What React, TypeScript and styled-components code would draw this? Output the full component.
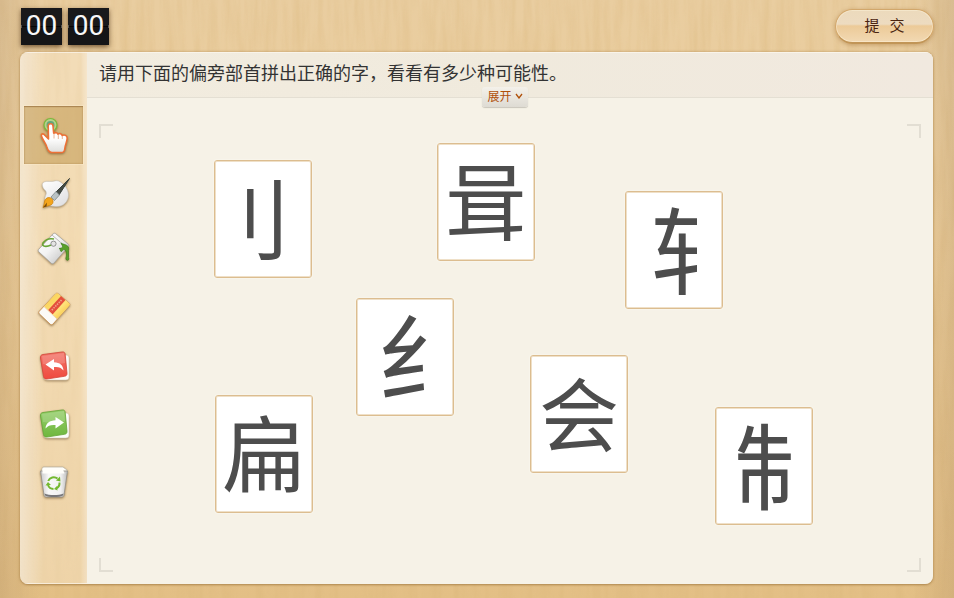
import React, { useState } from "react";
import styled, { createGlobalStyle, css } from "styled-components";

const sans = `"Noto Sans CJK SC", "Noto Sans", sans-serif`;

const grain = (opacity: number) =>
  `url("data:image/svg+xml,${encodeURIComponent(
    `<svg xmlns='http://www.w3.org/2000/svg' width='640' height='640'><filter id='g' x='0' y='0' width='100%' height='100%'><feTurbulence type='fractalNoise' baseFrequency='0.13 0.012' numOctaves='3' seed='7' stitchTiles='stitch'/><feColorMatrix values='0 0 0 0 0.68  0 0 0 0 0.45  0 0 0 0 0.18  1.6 0 0 0 -0.55'/></filter><rect width='640' height='640' filter='url(#g)' opacity='${opacity}'/></svg>`
  )}")`;

const GlobalStyle = createGlobalStyle`
  *, *::before, *::after { box-sizing: border-box; }
  body { margin: 0; font-family: ${sans}; }
  button { font-family: inherit; padding: 0; border: 0; background: none; cursor: pointer; }
`;

const Page = styled.div`
  display: flex;
  flex-direction: column;
  min-height: 100vh;
  padding: 0 20px 14px;
  background:
    linear-gradient(90deg, rgba(150, 120, 85, 0.2), rgba(150, 120, 85, 0) 40px, rgba(150, 120, 85, 0) calc(100% - 40px), rgba(150, 120, 85, 0.2)),
    ${grain(0.35)},
    linear-gradient(#e9cda0, #eccd9a 40%, #e3bf85);
`;

const Header = styled.header`
  display: flex;
  justify-content: space-between;
  align-items: flex-start;
  height: 52px;
  padding: 8px 0 0 1px;
`;

const Timer = styled.div`
  display: flex;
  gap: 6px;
`;

const Digits = styled.span`
  width: 41px;
  height: 37px;
  color: #f7f7f7;
  font: 400 28px/36px Roboto, sans-serif;
  text-align: center;
  background:
    linear-gradient(#555, #555) 0 17px / 1px 3px no-repeat,
    linear-gradient(#555, #555) 100% 17px / 1px 3px no-repeat,
    linear-gradient(#19191b 0 18px, #050505 18px 19px, #151517 19px);
  box-shadow: 0 2px 5px rgba(70, 40, 10, 0.7);
`;

const Submit = styled.button`
  width: 99px;
  height: 35px;
  margin-top: 1px;
  border: 1px solid #d2a76b;
  border-bottom: 2px solid #c19557;
  border-radius: 18px;
  color: #4a2410;
  font-size: 15px;
  line-height: 28px;
  padding-bottom: 2px;
  white-space: pre;
  background: linear-gradient(#ecdabc, #eddbc0 44%, #ecca98 50%, #f2d9b3);
  box-shadow: inset 0 0 0 1px rgba(255, 245, 220, 0.45), 0 1px 4px rgba(150, 100, 40, 0.45);
`;

const Panel = styled.main`
  display: flex;
  flex: 1;
  margin-right: 1px;
  border-radius: 8px;
  overflow: hidden;
  background: rgba(255, 243, 220, 0.4);
  box-shadow: 0 1px 2px #b48d55, 0 0 3px rgba(160, 115, 55, 0.5);
`;

const Toolbar = styled.nav`
  display: flex;
  flex: 0 0 67px;
  flex-direction: column;
  padding: 53px 4px 0;
  border: solid rgba(255, 255, 255, 0.55);
  border-width: 1px 0;
  background: linear-gradient(90deg, rgba(255, 255, 255, 0.4), rgba(255, 255, 255, 0) 24px, rgba(255, 255, 255, 0) 60px, rgba(255, 255, 255, 0.3));
`;

const Tool = styled.button<{ $active: boolean }>`
  display: grid;
  place-items: center;
  height: 58px;
  ${(p) =>
    p.$active &&
    css`
      background: rgba(188, 145, 70, 0.5);
      box-shadow: inset 0 1px 1px #a98350, inset 0 0 2px rgba(150, 105, 50, 0.6), 0 0 0 1px rgba(255, 240, 210, 0.35);
    `}
`;

const Glyph = styled.svg`
  width: 40px;
  height: 40px;
  overflow: visible;
  filter: drop-shadow(0 1px 1px rgba(90, 60, 20, 0.55));
`;

const Work = styled.section`
  display: flex;
  flex: 1;
  flex-direction: column;
  min-width: 0;
  background: #f6f2e7;
`;

const Question = styled.div`
  display: flex;
  position: relative;
  height: 46px;
  padding-left: 12px;
  border-top: 1px solid #f9f4ea;
  border-bottom: 1px solid #e4dfd3;
  background: linear-gradient(90deg, #f2ecdf, #f0eadd 50%, #f1e9df);
`;

const Prompt = styled.h1`
  margin: 0;
  color: #333;
  font-size: 18px;
  font-weight: 400;
  line-height: 38px;
`;

const Expand = styled.button`
  display: flex;
  position: absolute;
  z-index: 1;
  top: 34px;
  left: calc(50% - 28px);
  align-items: center;
  justify-content: center;
  gap: 3px;
  width: 46px;
  height: 20px;
  padding-bottom: 2px;
  border-radius: 3px;
  color: #b0500a;
  font-size: 12px;
  line-height: 18px;
  background: linear-gradient(#f4f1ea, #dedbd3);
  box-shadow: 0 1px 1px #c9c5bb;
`;

const Canvas = styled.div`
  position: relative;
  flex: 1;
  min-height: 440px;
`;

const Corner = styled.span<{ $v: "top" | "bottom"; $h: "left" | "right" }>`
  position: absolute;
  ${(p) => p.$v}: ${(p) => (p.$v === "top" ? 26 : 12)}px;
  ${(p) => p.$h}: 12px;
  width: 14px;
  height: 14px;
  border: 0 solid #e2ded3;
  border-${(p) => p.$v}-width: 2px;
  border-${(p) => p.$h}-width: 2px;
`;

const Card = styled.button<{ $x: number; $y: number }>`
  position: absolute;
  left: ${(p) => p.$x}px;
  top: ${(p) => p.$y}px;
  display: flex;
  align-items: center;
  justify-content: center;
  width: 98px;
  height: 118px;
  padding-bottom: 8px;
  border: 1px solid #dcbd90;
  border-radius: 3px;
  background: #fff;
  box-shadow: inset 0 0 0 1px #efe0c8, 0 0 2px #fffdf6;
`;

const Radical = styled.span<{ $size: number; $width?: number; $side?: "start" | "end"; $crop?: boolean }>`
  display: flex;
  flex: none;
  justify-content: flex-${(p) => p.$side ?? "start"};
  width: ${(p) => (p.$width ? `${p.$width}px` : "auto")};
  overflow: ${(p) => (p.$crop ? "hidden" : "visible")};
  color: #4d4d4d;
  font-size: ${(p) => p.$size}px;
  line-height: 106px;
  white-space: nowrap;
`;

const HandIcon = () => (
  <Glyph viewBox="0 0 40 40" aria-hidden="true">
    <circle cx="16.5" cy="10" r="6.5" fill="#b5d18b" stroke="#7abb3b" strokeWidth="1.2" />
    <circle cx="16.5" cy="10" r="4" fill="#66a67b" />
    <path
      d="M14.2 11c0-3 4.8-3 4.8 0l.7 7.2c1.8-1 3.7-.6 4.3 1 1.500-1.200 3.600-.6 4.200 1.200 2.300-1 4.800 0 5 2.600-.1 3.500-1.800 6-2.200 9.500-.3 3.500-1 5-3 5H18c-3.500 0-4.500-3-5.300-6-.8-3.500-5.600-8.800-5.300-11.500.4-1.700 2.300-1.400 3.400.3L14.500 24Z"
      fill="url(#hand)"
      stroke="#ed7137"
      strokeWidth="1.600"
      strokeLinejoin="round"
    />
    <path d="M20 18.500v5M24.300 20v4M28.300 21v3" stroke="#e5a17e" strokeWidth=".8" />
    <defs>
      <linearGradient id="hand" x2="0" y2="1">
        <stop offset=".5" stopColor="#fff" />
        <stop offset="1" stopColor="#dededc" />
      </linearGradient>
    </defs>
  </Glyph>
);

const BrushIcon = () => (
  <Glyph viewBox="0 0 40 40" aria-hidden="true">
    <path
      d="M8.500 13c-1-4 3-5 7-4.500 4 .3 6-1.500 9-.5 5 2 10 8 10 14 0 7-6 12-12.500 11.500-7 0-12-3-11-9 .5-2.500 2-3.500 1-6-1-2-3-2.500-3.500-5.500Z"
      fill="url(#pal)"
      stroke="#c8c4bd"
      strokeWidth=".6"
    />
    <path d="M35.500 5.500 22 19l3 3Z" fill="#454b45" stroke="#39413b" strokeWidth="1" strokeLinejoin="round" />
    <path d="m17 24 5-5.500 3.500 3.500-5 5.500Z" fill="#b9c2c4" stroke="#747d80" strokeWidth=".7" />
    <path d="M9 34.500c2-4 .5-7.500 4-9.500 3-1.500 6.500 1 6 4 0 4-6 3.500-10 5.500Z" fill="#f3a51c" stroke="#c97c0a" strokeWidth=".7" />
    <path d="m9 34.500 4-5-.5 4Z" fill="#7a4b08" />
    <defs>
      <linearGradient id="pal" x2=".6" y2="1">
        <stop stopColor="#fff" />
        <stop offset="1" stopColor="#e2e2e4" />
      </linearGradient>
    </defs>
  </Glyph>
);

const BucketIcon = () => (
  <Glyph viewBox="0 0 40 40" aria-hidden="true">
    <path d="m22 3 12 10c1 1 1 2 0 3L20 32c-1 1-2 1-3 0L5 21c-1-1-1-2 0-3L19 3c1-1 2-1 3 0Z" fill="url(#tin)" stroke="#a6a49f" strokeWidth=".8" />
    <path d="m18 4 15 13" stroke="#b9b9b9" fill="none" />
    <path d="M17 14C13 16 7 16 9 12c2-3 6-5 11-4" fill="none" stroke="#68a534" strokeWidth="1.600" />
    <circle cx="19.500" cy="12.700" r="2.600" fill="#e4e4e4" stroke="#888" strokeWidth=".9" />
    <path
      d="M27 12c2 1.500 4 1 6 2.500s2 3 1.500 5v7c1 2-.5 3.500-2 2.500-1.500-1.500 0-3 0-5 0-3-1-5.500-2.500-5.500s-1.500 2.500-3 2 .5-2-2-3c1.500-.5 3 0 3.500-1.500s-1.500-2.500-1.500-4Z"
      fill="#58a02a"
      stroke="#37781a"
      strokeWidth=".6"
    />
    <defs>
      <linearGradient id="tin" x2="1" y2="1">
        <stop stopColor="#fff" />
        <stop offset=".45" stopColor="#f3f3f3" />
        <stop offset="1" stopColor="#b9b9b9" />
      </linearGradient>
    </defs>
  </Glyph>
);

const EraserIcon = () => (
  <Glyph viewBox="0 0 40 40" aria-hidden="true">
    <path d="M21.500 5c1-1 2-1 3 0L35 14c1 1 1 2 0 3L19 35c-1 1-2 1-3 0L5.500 25c-1-1-1-2 0-3Z" fill="#fbfaf7" stroke="#c98c45" strokeWidth=".8" />
    <path d="M21.500 5c1-1 2-1 3 0L35 14c1 1 1 2 0 3L23 30 10 17.500Z" fill="url(#rub)" />
    <path d="m27 7 4.500 4L18.500 25.500l-4.500-4.300Z" fill="#e3503c" />
    <path d="m27.500 11-10.500 11" stroke="#f2a08a" strokeWidth="1.600" strokeDasharray="1.500 1" />
    <path d="M10 17.500 23 30" stroke="#efd4a4" />
    <defs>
      <linearGradient id="rub" x2="1" y2="1">
        <stop stopColor="#f8cb4a" />
        <stop offset=".6" stopColor="#ffe27a" />
        <stop offset="1" stopColor="#f3b322" />
      </linearGradient>
    </defs>
  </Glyph>
);

const ArrowIcon = ({ kind }: { kind: "undo" | "redo" }) => {
  const undo = kind === "undo";
  return (
    <Glyph viewBox="0 0 40 40" aria-hidden="true">
      <rect x="10" y="8" width="25" height="25" rx="3" fill="#fdfcf9" stroke="#d8ceba" strokeWidth=".6" />
      <path
        d="M9 7.500 28 5c2-.3 3 .5 3.200 2.500L33 26c.2 2-.6 3-2.600 3.300L13 32c-2 .2-3-.5-3.500-2.500L6.500 11c-.3-2 .5-3.200 2.500-3.500Z"
        fill={`url(#${kind})`}
        stroke={undo ? "#d3453a" : "#64a636"}
        strokeWidth=".8"
      />
      <path d="M8 9 30 6l1 10q-12 3-22 1Z" fill="#fff" opacity=".16" />
      {undo ? (
        <path d="m11.500 17.500 8.500-5.500v3.300c6 .2 9 3 9.500 8.200-2.500-3-5-4-9.500-3.500v3.500Z" fill="#fff" />
      ) : (
        <path d="m30 17.500-8.500-5.500v3.300c-6 .2-9.500 3-10 8.200 2.500-3 5.500-4 10-3.500v3.500Z" fill="#fff" />
      )}
      <defs>
        <linearGradient id={kind} x2="0" y2="1">
          <stop stopColor={undo ? "#f2766a" : "#96ce6b"} />
          <stop offset="1" stopColor={undo ? "#ef4a3f" : "#6fb73e"} />
        </linearGradient>
      </defs>
    </Glyph>
  );
};

const BinIcon = () => (
  <Glyph viewBox="0 0 40 40" aria-hidden="true">
    <path d="M9 4h20l4 3 .5 3h-27Z" fill="#fffefa" stroke="#bdb6a6" strokeWidth=".8" />
    <path d="M6.500 8h27L30 32c-.3 1.500-1 2-3 2H13c-2 0-2.700-.5-3-2Z" fill="url(#bin)" stroke="#98948b" strokeWidth=".9" />
    <path d="M8.500 5h20l2 5.500h-22Z" fill="#fffefa" />
    <path d="M10.500 30.500c5 2 14 2 19 0l-.5 2c-4 2-14 2-18 0Z" fill="#77777a" />
    <g fill="none" stroke="#73b82f" strokeWidth="2">
      <path d="M14.200 18a6 6 0 0 1 9.300-2.500" />
      <path d="M25.500 19.500a6 6 0 0 1-3.500 6" />
      <path d="M19.500 26a6 6 0 0 1-5.500-4" />
    </g>
    <path d="m22 17.500 4.500 1-.5-5ZM23 23l-3 3 3.500 1.500ZM11.500 22.500l2.500-3.500 3 3Z" fill="#73b82f" />
    <defs>
      <linearGradient id="bin" x2="1" y2="0">
        <stop stopColor="#c9c9ca" />
        <stop offset=".3" stopColor="#f8f8f8" />
        <stop offset=".75" stopColor="#f1f1f1" />
        <stop offset="1" stopColor="#bcbcbc" />
      </linearGradient>
    </defs>
  </Glyph>
);

const tools = [
  { name: "选择", icon: <HandIcon /> },
  { name: "画笔", icon: <BrushIcon /> },
  { name: "填充", icon: <BucketIcon /> },
  { name: "橡皮", icon: <EraserIcon /> },
  { name: "撤销", icon: <ArrowIcon kind="undo" /> },
  { name: "重做", icon: <ArrowIcon kind="redo" /> },
  { name: "清空", icon: <BinIcon /> },
];

type Piece = {
  text: string;
  x: number;
  y: number;
  size: number;
  width?: number;
  side?: "start" | "end";
  crop?: boolean;
};

// Side radicals are centred on their ink; a cropped piece shows only the left part of its character.
const pieces: Piece[] = [
  { text: "刂", x: 127, y: 62, size: 88, width: 56, side: "end" },
  { text: "咠", x: 350, y: 45, size: 84 },
  { text: "轧", x: 538, y: 93, size: 94, width: 46, crop: true },
  { text: "纟", x: 269, y: 200, size: 96, width: 56 },
  { text: "会", x: 443, y: 257, size: 80 },
  { text: "扁", x: 128, y: 297, size: 84 },
  { text: "制", x: 628, y: 309, size: 94, width: 60, crop: true },
];

export default function App() {
  const [active, setActive] = useState(0);
  return (
    <>
      <GlobalStyle />
      <Page>
        <Header>
          <Timer role="timer">
            <Digits>00</Digits>
            <Digits>00</Digits>
          </Timer>
          <Submit type="button">{"提   交"}</Submit>
        </Header>
        <Panel>
          <Toolbar>
            {tools.map((tool, i) => (
              <Tool key={tool.name} type="button" aria-label={tool.name} $active={i === active} onClick={() => setActive(i)}>
                {tool.icon}
              </Tool>
            ))}
          </Toolbar>
          <Work>
            <Question>
              <Prompt>请用下面的偏旁部首拼出正确的字，看看有多少种可能性。</Prompt>
              <Expand type="button">
                展开
                <svg width="8" height="6" viewBox="0 0 8 6" aria-hidden="true">
                  <path d="m1 1 3 4 3-4" fill="none" stroke="currentColor" strokeWidth="1.300" />
                </svg>
              </Expand>
            </Question>
            <Canvas>
              <Corner $v="top" $h="left" />
              <Corner $v="top" $h="right" />
              <Corner $v="bottom" $h="left" />
              <Corner $v="bottom" $h="right" />
              {pieces.map((p) => (
                <Card key={p.text} type="button" $x={p.x} $y={p.y}>
                  <Radical $size={p.size} $width={p.width} $side={p.side} $crop={p.crop}>
                    {p.text}
                  </Radical>
                </Card>
              ))}
            </Canvas>
          </Work>
        </Panel>
      </Page>
    </>
  );
}
